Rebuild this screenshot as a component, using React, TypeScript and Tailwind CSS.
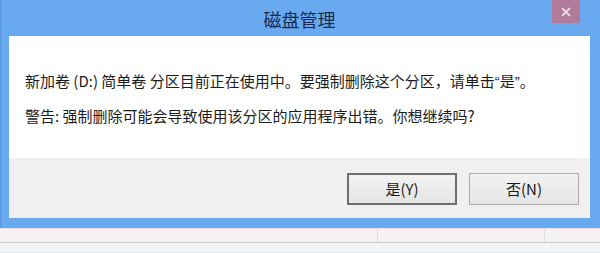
import React from 'react';

const font = { fontFamily: '"Noto Sans CJK SC", "Noto Sans", sans-serif' };

const DialogButton: React.FC<{ label: string; primary?: boolean }> = ({ label, primary = false }) => {
    return (
        <button
            className={`w-[110px] h-[32px] flex items-center justify-center text-[15px] text-[#1a1a1a] bg-gradient-to-b from-[#f2f2f2] to-[#e5e5e5] ${primary ? 'border-2 border-[#6f6f6f]' : 'border border-[#acacac]'}`}
        >
            {label}
        </button>
    );
};

export default function App() {
    return (
        <div className="w-[600px] h-[253px] overflow-hidden bg-[#f4f2f2]" style={font}>
            {/* Window frame */}
            <div className="bg-[#69a9ef] border-l-2 border-[#5d9be2] pr-[10px] pl-[7px] pb-[10px]">
                {/* Title bar */}
                <div className="h-[36px] relative flex items-center justify-center text-[#17294f]">
                    <h1 className="text-[18px] leading-none mt-[1px]">磁盘管理</h1>
                    <div className="absolute top-0 right-[10px] w-[28px] h-[23px] bg-[#b27a9b] flex items-center justify-center">
                        <svg width="10" height="10" viewBox="0 0 10 10">
                            <path d="M1 1 L9 9 M9 1 L1 9" stroke="#e8dce6" strokeWidth="1.8" />
                        </svg>
                    </div>
                </div>

                {/* Content */}
                <div className="h-[122px] bg-white pl-[16px] pt-[35px] flex flex-col gap-[14px] text-[15px] leading-[20px] text-[#1c1c1c]">
                    <p>
                        新加卷 (D:) 简单卷 分区目前正在使用中。要强制删除这个分区，请单击
                        <span style={{ fontFamily: '"Liberation Sans", sans-serif' }}>“</span>是
                        <span style={{ fontFamily: '"Liberation Sans", sans-serif' }}>”</span>。
                    </p>
                    <p>警告: 强制删除可能会导致使用该分区的应用程序出错。你想继续吗?</p>
                </div>

                {/* Footer */}
                <div className="h-[60px] bg-[#f0f0f0] flex justify-end items-start pt-[15px] pr-[11px] gap-[12px]">
                    <DialogButton label="是(Y)" primary />
                    <DialogButton label="否(N)" />
                </div>
            </div>

            {/* Status bar behind */}
            <div className="h-[15px] flex border-t border-[#e6e6e6] border-b border-b-[#cfcfcf] bg-[#f6f2f2]">
                <div className="w-[378px] border-r border-[#dedede]" />
                <div className="w-[167px] border-r border-[#dedede]" />
                <div className="flex-1" />
            </div>
            <div className="h-[10px] bg-[#f1f5f8] border-b border-[#e2e8ee]" />
        </div>
    );
}
